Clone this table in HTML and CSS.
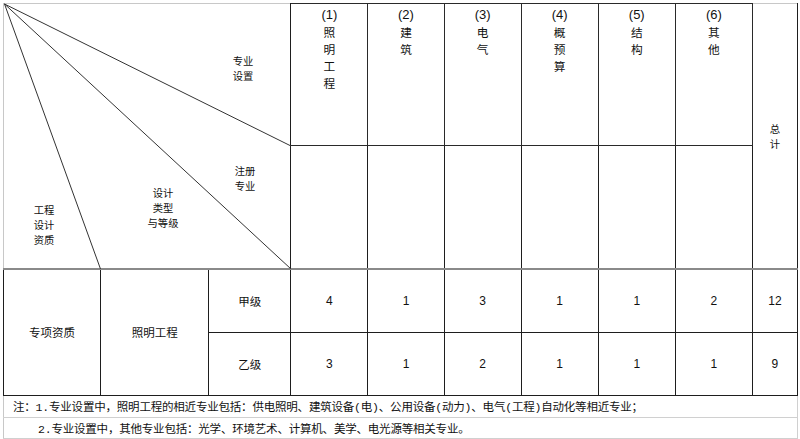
FILE: index.html
```html
<!DOCTYPE html>
<html lang="zh">
<head>
<meta charset="utf-8">
<title>照明工程专项资质</title>
<link rel="stylesheet" href="styles.css">
</head>
<body>
<div class="sheet">
<table class="grid">
  <colgroup>
    <col class="c1"><col class="c2"><col class="c3">
    <col class="cm"><col class="cm2"><col class="cm"><col class="cm"><col class="cm"><col class="cm">
    <col class="ct">
  </colgroup>
  <tr class="h1">
    <td class="diag" colspan="3" rowspan="2">
      <div class="diag-box">
        <svg class="diag-lines" width="287" height="265" viewBox="0 0 287 265">
          <line x1="0.5" y1="0" x2="287" y2="142" />
          <line x1="0.5" y1="0" x2="287" y2="265" />
          <line x1="0.5" y1="0" x2="96.5" y2="265" />
        </svg>
        <div class="lbl lbl-zy">专业<br>设置</div>
        <div class="lbl lbl-zc">注册<br>专业</div>
        <div class="lbl lbl-sj">设计<br>类型<br>与等级</div>
        <div class="lbl lbl-gc">工程<br>设计<br>资质</div>
      </div>
    </td>
    <td class="vh"><span class="num">(1)</span>照<br>明<br>工<br>程</td>
    <td class="vh"><span class="num">(2)</span>建<br>筑</td>
    <td class="vh"><span class="num">(3)</span>电<br>气</td>
    <td class="vh"><span class="num">(4)</span>概<br>预<br>算</td>
    <td class="vh"><span class="num">(5)</span>结<br>构</td>
    <td class="vh"><span class="num">(6)</span>其<br>他</td>
    <td class="total" rowspan="2">总<br>计</td>
  </tr>
  <tr class="h2">
    <td></td><td></td><td></td><td></td><td></td><td></td>
  </tr>
  <tr class="r1">
    <td class="lab" rowspan="2">专项资质</td>
    <td class="lab" rowspan="2">照明工程</td>
    <td class="lab">甲级</td>
    <td class="n">4</td><td class="n">1</td><td class="n">3</td><td class="n">1</td><td class="n">1</td><td class="n">2</td><td class="n">12</td>
  </tr>
  <tr class="r2">
    <td class="lab">乙级</td>
    <td class="n">3</td><td class="n">1</td><td class="n">2</td><td class="n">1</td><td class="n">1</td><td class="n">1</td><td class="n">9</td>
  </tr>
  <tr class="note1">
    <td class="note" colspan="10">注：1.专业设置中，照明工程的相近专业包括：供电照明、建筑设备(电)、公用设备(动力)、电气(工程)自动化等相近专业；</td>
  </tr>
  <tr class="note2">
    <td class="note note-indent" colspan="10">2.专业设置中，其他专业包括：光学、环境艺术、计算机、美学、电光源等相关专业。</td>
  </tr>
</table>
</div>
</body>
</html>
```
FILE: styles.css
```css
html, body {
  margin: 0;
  padding: 0;
  background: #ffffff;
}
body {
  font-family: "Noto Sans CJK SC", "Liberation Sans", sans-serif;
  color: #111;
  font-size: 11.5px;
}
.sheet {
  padding: 3px 0 0 3px;
  width: 797px;
  height: 436px;
  overflow: hidden;
}
.grid {
  border-collapse: collapse;
  table-layout: fixed;
  width: 795px;
  border-top: 1px solid #c8c8c8;
  border-left: 1px solid #c8c8c8;
}
.c1 { width: 97px; }
.c2 { width: 108px; }
.c3 { width: 82px; }
.cm { width: 77px; }
.cm2 { width: 76px; }
.ct { width: 45px; }

.grid td {
  border: 1px solid #1e1e1e;
  padding: 0;
  text-align: center;
  vertical-align: middle;
}
.h1 { height: 142px; }
.h2 { height: 123px; }
.r1 { height: 63px; }
.r2 { height: 63px; }
.note1 { height: 22px; }
.note2 { height: 21px; }

.h1 td { border-top: 1px solid #c8c8c8; }
.grid td.diag {
  border-left: 1px solid #c8c8c8;
  vertical-align: top;
  position: relative;
}
.diag-box {
  position: relative;
  height: 264px;
}
.diag-lines {
  position: absolute;
  left: 0;
  top: 0;
  overflow: visible;
}
.diag-lines line {
  stroke: #333;
  stroke-width: 1;
}
.lbl {
  position: absolute;
  width: 60px;
  text-align: center;
  line-height: 15px;
  font-size: 10.3px;
}
.lbl-zy { left: 209px; top: 49px; }
.lbl-zc { left: 211px; top: 159px; }
.lbl-sj { left: 129px; top: 181px; }
.lbl-gc { left: 10px; top: 198px; }

.grid td.vh {
  vertical-align: top;
  font-size: 11.7px;
  line-height: 17px;
  padding-top: 2px;
  border-color: #2a2a2a;
}
.num {
  display: block;
  font-family: "Liberation Sans", sans-serif;
  font-size: 13px;
  line-height: 17px;
}
.total {
  font-size: 10.3px;
  line-height: 15px;
}
.r1 td { border-top: 2px solid #8a8a8a; }
.grid .r1 td.lab, .grid .r2 td.lab { font-size: 11.5px; }
.n {
  font-family: "Liberation Sans", sans-serif;
  font-size: 12px;
}
.grid td.note {
  font-family: "Liberation Mono", "Noto Sans CJK SC", monospace;
  text-align: left;
  padding-left: 9px;
  border-left: 1px solid #c8c8c8;
  border-right: 1px solid #d0d0d0;
  border-bottom: 1px solid #d0d0d0;
  white-space: nowrap;
  letter-spacing: -0.2px;
}
.grid td.note-indent {
  padding-left: 34px;
}
```
